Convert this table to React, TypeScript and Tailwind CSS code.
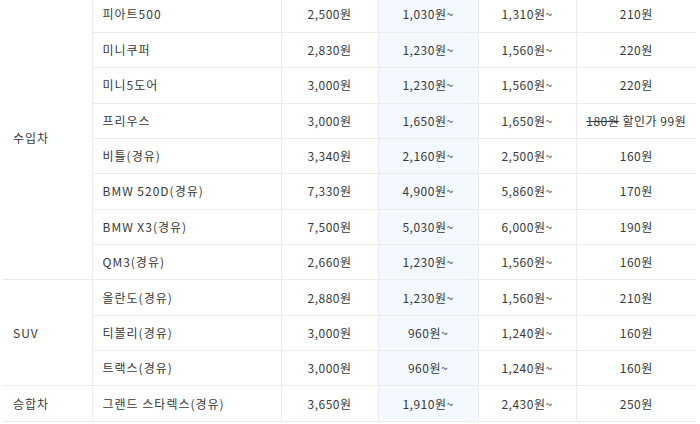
type Row = {
  name: string
  base: string
  member: string
  normal: React.ReactNode
  km: React.ReactNode
}

type Group = { label: string; rows: Row[] }

const GROUPS: Group[] = [
  {
    label: '수입차',
    rows: [
      { name: '피아트500', base: '2,500원', member: '1,030원~', normal: '1,310원~', km: '210원' },
      { name: '미니쿠퍼', base: '2,830원', member: '1,230원~', normal: '1,560원~', km: '220원' },
      { name: '미니5도어', base: '3,000원', member: '1,230원~', normal: '1,560원~', km: '220원' },
      {
        name: '프리우스',
        base: '3,000원',
        member: '1,650원~',
        normal: '1,650원~',
        km: (
          <>
            <span className="line-through">180원</span> 할인가 99원
          </>
        ),
      },
      { name: '비틀(경유)', base: '3,340원', member: '2,160원~', normal: '2,500원~', km: '160원' },
      { name: 'BMW 520D(경유)', base: '7,330원', member: '4,900원~', normal: '5,860원~', km: '170원' },
      { name: 'BMW X3(경유)', base: '7,500원', member: '5,030원~', normal: '6,000원~', km: '190원' },
      { name: 'QM3(경유)', base: '2,660원', member: '1,230원~', normal: '1,560원~', km: '160원' },
    ],
  },
  {
    label: 'SUV',
    rows: [
      { name: '올란도(경유)', base: '2,880원', member: '1,230원~', normal: '1,560원~', km: '210원' },
      { name: '티볼리(경유)', base: '3,000원', member: '960원~', normal: '1,240원~', km: '160원' },
      { name: '트랙스(경유)', base: '3,000원', member: '960원~', normal: '1,240원~', km: '160원' },
    ],
  },
  {
    label: '승합차',
    rows: [
      { name: '그랜드 스타렉스(경유)', base: '3,650원', member: '1,910원~', normal: '2,430원~', km: '250원' },
    ],
  },
]

const cell = 'border-b border-r border-[#ebebeb] text-center'

export default function App() {
  return (
    <div
      className="h-[424px] w-[700px] overflow-hidden bg-white text-[12px] tracking-[0.5px] text-[#3a3a3a]"
      style={{ fontFamily: '"Noto Sans CJK KR", "Noto Sans", sans-serif' }}
    >
      <table className="ml-[3px] -mt-[3px] w-[693px] table-fixed border-collapse">
        <colgroup>
          <col className="w-[89px]" />
          <col className="w-[189px]" />
          <col className="w-[97px]" />
          <col className="w-[100px]" />
          <col className="w-[98px]" />
          <col className="w-[120px]" />
        </colgroup>
        <tbody>
          {GROUPS.map((g) =>
            g.rows.map((r, i) => (
              <tr key={r.name} className="h-[35.36px]">
                {i === 0 && (
                  <td
                    rowSpan={g.rows.length}
                    className="border-b border-r border-[#ebebeb] pl-[10px] text-left tracking-[1px]"
                  >
                    {g.label}
                  </td>
                )}
                <td className="border-b border-r border-[#ebebeb] pl-[10px] text-left tracking-[1px]">{r.name}</td>
                <td className={cell}>{r.base}</td>
                <td className={`${cell} bg-[#f3f9fe]`}>{r.member}</td>
                <td className={cell}>{r.normal}</td>
                <td className="border-b border-[#ebebeb] text-center">{r.km}</td>
              </tr>
            )),
          )}
        </tbody>
      </table>
    </div>
  )
}
